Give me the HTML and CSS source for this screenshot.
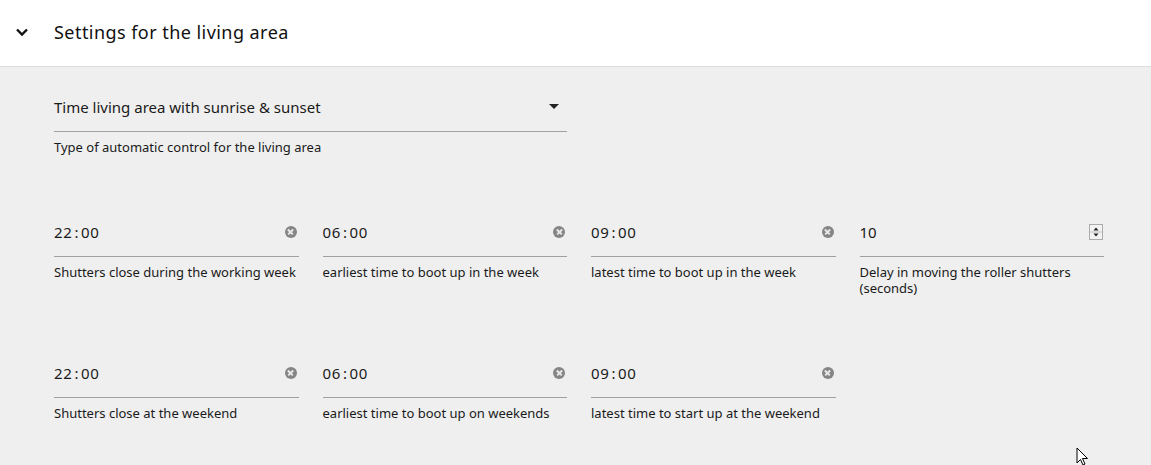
FILE: index.html
```html
<!DOCTYPE html>
<html>
<head>
<meta charset="utf-8">
<link rel="stylesheet" href="styles.css">
</head>
<body>
<div class="panel">
  <header class="panel-header">
    <svg class="chevron" width="14" height="10" viewBox="0 0 14 10"><path d="M2 2.5 L7 7.5 L12 2.5" fill="none" stroke="#111" stroke-width="2.4"/></svg>
    <h2 class="title">Settings for the living area</h2>
  </header>
  <section class="panel-body">
    <div class="grid">
      <div class="field span2">
        <div class="control">
          <span class="value">Time living area with sunrise &amp; sunset</span>
          <svg class="caret" width="10" height="6" viewBox="0 0 10 6"><path d="M0 0 H10 L5 5 Z" fill="#222"/></svg>
        </div>
        <div class="label">Type of automatic control for the living area</div>
      </div>
      <div class="spacer2"></div>

      <div class="field">
        <div class="control"><span class="value time">22<span class="colon">:</span>00</span><span class="clear"></span></div>
        <div class="label">Shutters close during the working week</div>
      </div>
      <div class="field">
        <div class="control"><span class="value time">06<span class="colon">:</span>00</span><span class="clear"></span></div>
        <div class="label">earliest time to boot up in the week</div>
      </div>
      <div class="field">
        <div class="control"><span class="value time">09<span class="colon">:</span>00</span><span class="clear"></span></div>
        <div class="label">latest time to boot up in the week</div>
      </div>
      <div class="field">
        <div class="control"><span class="value">10</span>
          <span class="spin"><svg width="14" height="16" viewBox="0 0 14 16"><rect x="0.5" y="0.5" width="13" height="15" fill="#f2f2f2" stroke="#acacac"/><line x1="1" y1="8" x2="13" y2="8" stroke="#c4c4c4"/><path d="M4.5 6.5 H9.5 L7 3.5 Z" fill="#222"/><path d="M4.5 9.5 H9.5 L7 12.5 Z" fill="#222"/></svg></span>
        </div>
        <div class="label">Delay in moving the roller shutters (seconds)</div>
      </div>

      <div class="field">
        <div class="control"><span class="value time">22<span class="colon">:</span>00</span><span class="clear"></span></div>
        <div class="label">Shutters close at the weekend</div>
      </div>
      <div class="field">
        <div class="control"><span class="value time">06<span class="colon">:</span>00</span><span class="clear"></span></div>
        <div class="label">earliest time to boot up on weekends</div>
      </div>
      <div class="field">
        <div class="control"><span class="value time">09<span class="colon">:</span>00</span><span class="clear"></span></div>
        <div class="label">latest time to start up at the weekend</div>
      </div>
    </div>
  </section>
</div>
<svg class="cursor" width="14" height="20" viewBox="0 0 14 20"><path d="M1 1 V16 L4.5 12.5 L7 18 L9 17 L6.5 11.5 L11.5 11.5 Z" fill="#fff" stroke="#000" stroke-width="1"/></svg>
</body>
</html>
```
FILE: styles.css
```css
html, body {
  margin: 0;
  padding: 0;
}
body {
  width: 1151px;
  height: 465px;
  overflow: hidden;
  background: #efefef;
  font-family: "Noto Sans", "Open Sans", sans-serif;
  color: #1a1a1a;
  position: relative;
}
.panel-header {
  height: 67px;
  background: #fff;
  border-bottom: 1px solid #dcdcdc;
  display: flex;
  align-items: center;
  box-sizing: border-box;
}
.chevron {
  margin-left: 15px;
  margin-right: 25px;
  margin-top: -3px;
}
.title {
  margin: 0;
  font-size: 18px;
  font-weight: 400;
  letter-spacing: 0.45px;
  color: #111;
  margin-top: -3px;
}
.panel-body {
  padding: 30px 47px 0 54px;
}
.grid {
  display: grid;
  grid-template-columns: repeat(4, 244.5px);
  grid-template-rows: 125px 141px auto;
  column-gap: 24px;
}
.span2 { grid-column: span 2; }
.spacer2 { grid-column: span 2; }
.control {
  height: 35px;
  border-bottom: 1px solid #a0a0a0;
  display: flex;
  align-items: flex-start;
  justify-content: space-between;
  box-sizing: border-box;
}
.value {
  font-size: 15px;
  line-height: 20px;
  color: #1a1a1a;
}
.time {
  letter-spacing: 0.6px;
}
.time .colon {
  margin: 0 2px;
}
.caret {
  margin-right: 8px;
  margin-top: 7px;
}
.clear {
  width: 12px;
  height: 12px;
  border-radius: 50%;
  background: #858585;
  position: relative;
  margin-right: 2px;
  margin-top: 4px;
}
.clear::before, .clear::after {
  content: "";
  position: absolute;
  left: 2.5px;
  top: 5.25px;
  width: 7px;
  height: 1.5px;
  background: #e8e8e8;
  transform: rotate(45deg);
}
.clear::after { transform: rotate(-45deg); }
.spin {
  display: flex;
  margin-right: 1px;
  margin-top: 2px;
}
.label {
  font-size: 13px;
  color: #1a1a1a;
  margin-top: 7px;
  line-height: 16px;
}
.cursor {
  position: absolute;
  left: 1076px;
  top: 447px;
}
```
